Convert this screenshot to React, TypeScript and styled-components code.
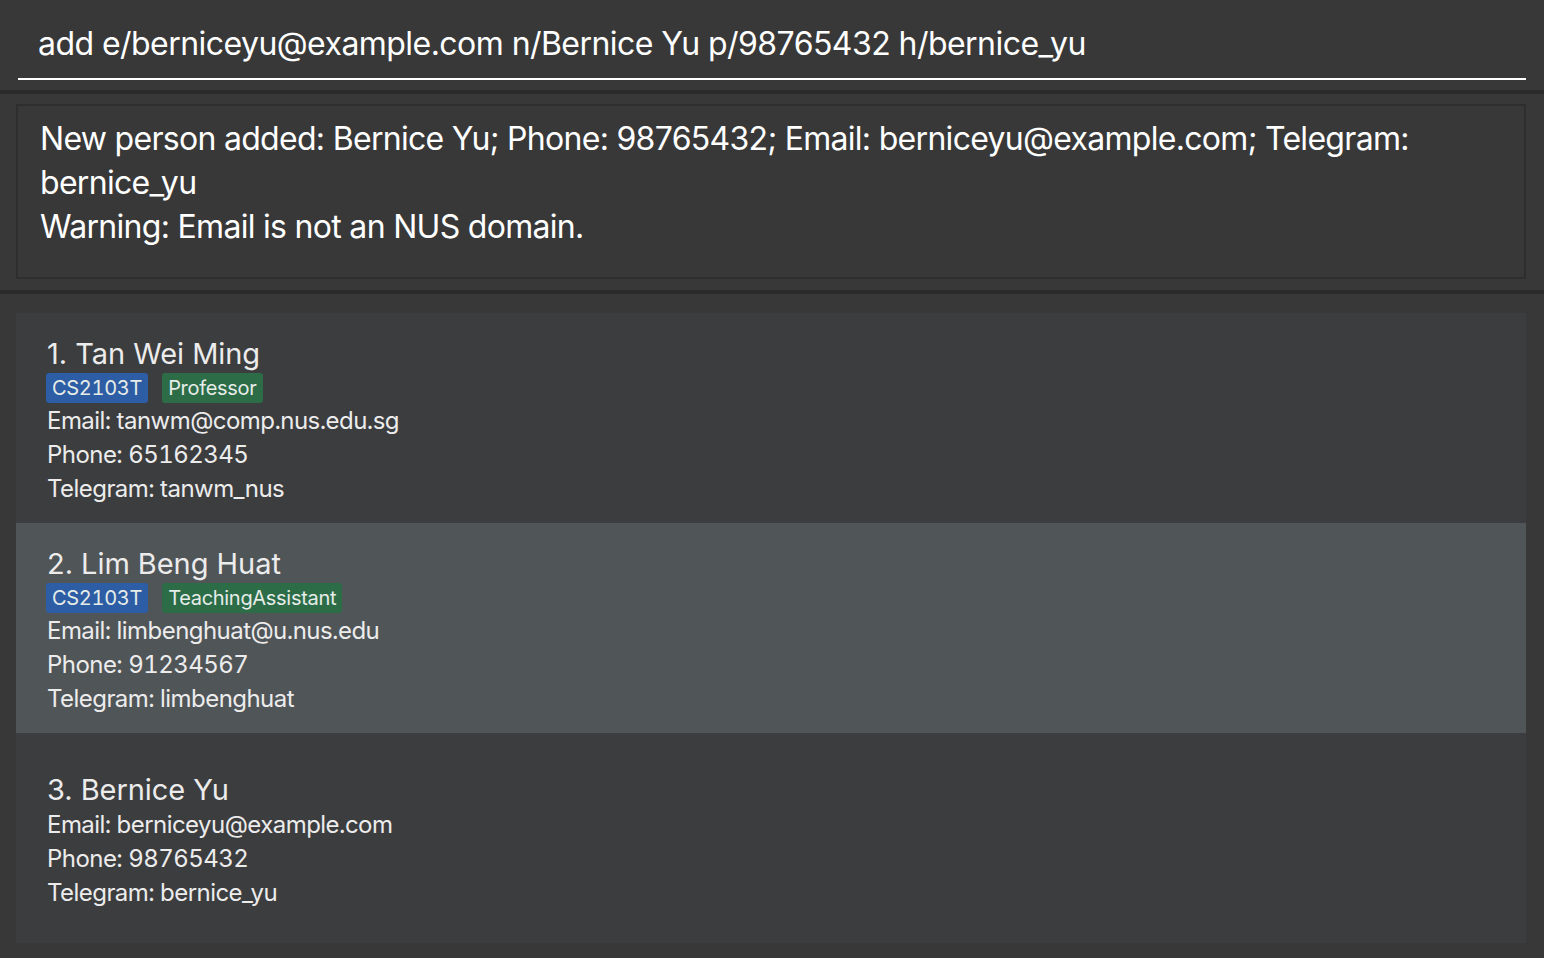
import styled, { createGlobalStyle } from "styled-components"

const GlobalStyle = createGlobalStyle`
    html, body {
        margin: 0;
        padding: 0;
        background: #383838;
    }
    body {
        font-family: Inter, "Noto Sans", "Liberation Sans", sans-serif;
        color: #ffffff;
    }
`

const Page = styled.div`
    display: flex;
    flex-flow: column nowrap;
    width: 1544px;
    height: 958px;
    background: #383838;
    overflow: hidden;
`

const CommandBar = styled.div`
    height: 90px;
    padding: 0 18px;
    box-sizing: border-box;
`

const CommandInput = styled.div`
    height: 80px;
    box-sizing: border-box;
    border-bottom: 2px solid #ffffff;
    padding: 26px 0 0 20px;
    font-size: 32px;
    line-height: 36px;
    letter-spacing: -0.55px;
    color: #ffffff;
    white-space: nowrap;
`

const Divider = styled.div`
    height: 4px;
    background: #2b2b2b;
    flex-shrink: 0;
`

const ResultArea = styled.div`
    padding: 10px 18px 11px 16px;
`

const ResultBox = styled.div`
    height: 175px;
    box-sizing: border-box;
    border: 2px solid #2e2e2e;
    padding: 11px 22px;
    font-size: 32px;
    line-height: 44px;
    letter-spacing: -0.7px;
    color: #ffffff;
`

const List = styled.div`
    display: flex;
    flex-flow: column nowrap;
    margin: 19px 18px 0 16px;
`

const Card = styled.div<{ $selected?: boolean }>`
    height: 210px;
    box-sizing: border-box;
    padding: 6px 31px 0;
    display: flex;
    flex-flow: column nowrap;
    justify-content: center;
    background: ${(p) => (p.$selected ? "#505558" : "#3c3d3f")};
    color: #ececec;
`

const Name = styled.div`
    font-size: 29px;
    line-height: 36px;
    letter-spacing: -0.05px;
`

const Tags = styled.div`
    display: flex;
    gap: 14px;
    margin: 1px 0 1px -1px;
`

const Tag = styled.span<{ $kind: "module" | "role" }>`
    display: inline-block;
    height: 30px;
    line-height: 30px;
    padding: 0 6px;
    border-radius: 3px;
    font-size: 20px;
    font-variant-numeric: tabular-nums;
    letter-spacing: -0.3px;
    color: #e6ece8;
    background: ${(p) => (p.$kind === "module" ? "#2d5da4" : "#2c6d48")};
`

const Field = styled.div`
    font-size: 24px;
    line-height: 34px;
    letter-spacing: -0.55px;
    font-variant-numeric: tabular-nums;
`

type Person = {
    name: string
    tags: { text: string; kind: "module" | "role" }[]
    email: string
    phone: string
    telegram: string
}

const people: Person[] = [
    {
        name: "Tan Wei Ming",
        tags: [
            { text: "CS2103T", kind: "module" },
            { text: "Professor", kind: "role" },
        ],
        email: "tanwm@comp.nus.edu.sg",
        phone: "65162345",
        telegram: "tanwm_nus",
    },
    {
        name: "Lim Beng Huat",
        tags: [
            { text: "CS2103T", kind: "module" },
            { text: "TeachingAssistant", kind: "role" },
        ],
        email: "limbenghuat@u.nus.edu",
        phone: "91234567",
        telegram: "limbenghuat",
    },
    {
        name: "Bernice Yu",
        tags: [],
        email: "berniceyu@example.com",
        phone: "98765432",
        telegram: "bernice_yu",
    },
]

export default function App() {
    return (
        <Page>
            <GlobalStyle />
            <CommandBar>
                <CommandInput>add e/berniceyu@example.com n/Bernice Yu p/98765432 h/bernice_yu</CommandInput>
            </CommandBar>
            <Divider />
            <ResultArea>
                <ResultBox>
                    New person added: Bernice Yu; Phone: 98765432; Email: berniceyu@example.com; Telegram:
                    <br />
                    bernice_yu
                    <br />
                    Warning: Email is not an NUS domain.
                </ResultBox>
            </ResultArea>
            <Divider />
            <List>
                {people.map((person, i) => (
                    <Card key={person.name} $selected={i === 1}>
                        <Name>{i + 1}. {person.name}</Name>
                        {person.tags.length > 0 && (
                            <Tags>
                                {person.tags.map((tag) => (
                                    <Tag key={tag.text} $kind={tag.kind}>{tag.text}</Tag>
                                ))}
                            </Tags>
                        )}
                        <Field>Email: {person.email}</Field>
                        <Field>Phone: {person.phone}</Field>
                        <Field>Telegram: {person.telegram}</Field>
                    </Card>
                ))}
            </List>
        </Page>
    )
}
